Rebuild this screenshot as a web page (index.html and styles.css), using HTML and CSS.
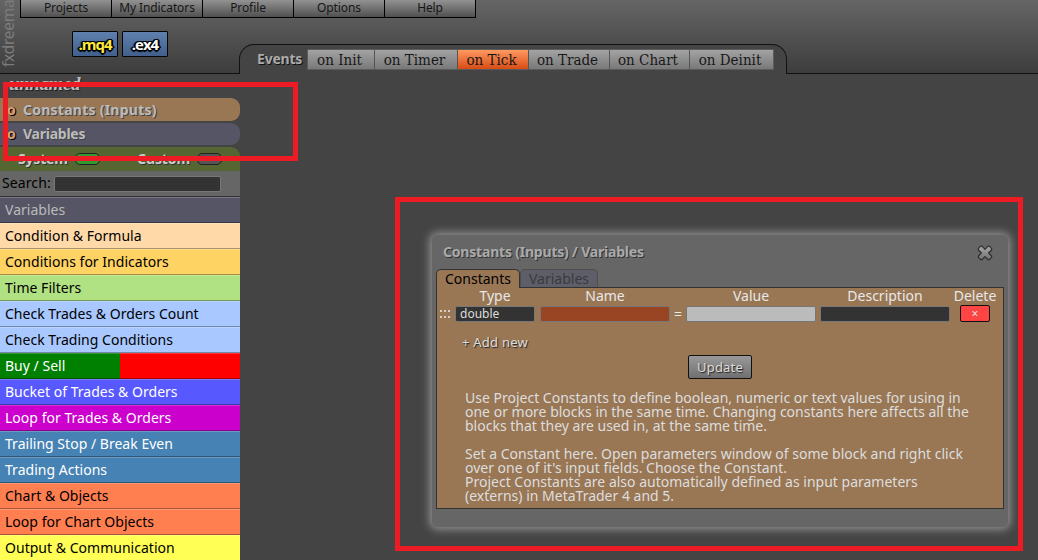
FILE: index.html
```html
<!DOCTYPE html>
<html lang="en">
<head>
<meta charset="utf-8">
<title>fxdreema</title>
<link rel="stylesheet" href="styles.css">
</head>
<body>
<header class="header">
  <div class="brand">fxdreema</div>
  <div class="header-main">
    <nav class="menu">
      <a>Projects</a><a>My Indicators</a><a>Profile</a><a>Options</a><a>Help</a>
    </nav>
    <div class="tools">
      <div class="exports">
        <button class="export export-src">.mq4</button>
        <button class="export">.ex4</button>
      </div>
      <div class="events">
        <span class="events-label">Events</span>
        <div class="event-tabs">
          <a class="w-init">on Init</a><a class="w-timer">on Timer</a><a class="w-tick active">on Tick</a><a class="w-trade">on Trade</a><a class="w-chart">on Chart</a><a class="w-deinit">on Deinit</a>
        </div>
      </div>
    </div>
  </div>
</header>

<aside class="sidebar">
  <div class="project-name">unnamed</div>
  <div class="pill pill-constants"><i>o</i><span>Constants (Inputs)</span></div>
  <div class="pill pill-variables"><i>o</i><span>Variables</span></div>
  <div class="sources">
    <span class="system">System</span><b class="switch on"></b>
    <span class="custom">Custom</span><b class="switch"></b>
  </div>
  <label class="search"><span>Search:</span><input type="text"></label>
  <ul class="blocks">
    <li class="c-variables"><span>Variables</span></li>
    <li class="c-condition"><span>Condition &amp; Formula</span></li>
    <li class="c-indicators"><span>Conditions for Indicators</span></li>
    <li class="c-time"><span>Time Filters</span></li>
    <li class="c-check"><span>Check Trades &amp; Orders Count</span></li>
    <li class="c-check"><span>Check Trading Conditions</span></li>
    <li class="c-buysell"><span>Buy / Sell</span></li>
    <li class="c-bucket"><span>Bucket of Trades &amp; Orders</span></li>
    <li class="c-loop"><span>Loop for Trades &amp; Orders</span></li>
    <li class="c-trading"><span>Trailing Stop / Break Even</span></li>
    <li class="c-trading"><span>Trading Actions</span></li>
    <li class="c-chart"><span>Chart &amp; Objects</span></li>
    <li class="c-chart"><span>Loop for Chart Objects</span></li>
    <li class="c-output"><span>Output &amp; Communication</span></li>
  </ul>
</aside>

<section class="dialog">
  <div class="dialog-head">
    <h2>Constants (Inputs) / Variables</h2>
    <svg class="close" width="16" height="16" viewBox="0 0 16 16">
      <defs><linearGradient id="steel" x1="0" y1="0" x2="0" y2="1"><stop offset="0" stop-color="#aaa"/><stop offset="1" stop-color="#707070"/></linearGradient></defs>
      <path d="M3.6 1.2H5L8 4.3 11 1.2h1.4L14.6 3.6V5L11.6 8l3 3v1.4l-2.2 2.2H11L8 11.6l-3 3H3.6L1.4 12.4V11l3-3-3-3V3.6Z" fill="url(#steel)" stroke="#2e2e2e" stroke-width="1.2" stroke-linejoin="round"/>
    </svg>
  </div>
  <div class="tabs"><a class="tab tab-on">Constants</a><a class="tab tab-off">Variables</a></div>
  <div class="panel">
    <div class="grid">
      <span></span><span>Type</span><span>Name</span><span></span><span>Value</span><span>Description</span><span>Delete</span>
      <svg class="grip" width="12" height="10" viewBox="0 0 12 10" fill="#d8d0c8"><path d="M0 1h2v2H0zM4 1h2v2H4zM8 1h2v2H8zM0 7h2v2H0zM4 7h2v2H4zM8 7h2v2H8z"/></svg>
      <input class="field dark" type="text" value="double">
      <input class="field rust" type="text">
      <span class="equals">=</span>
      <input class="field light" type="text">
      <input class="field dark" type="text">
      <button class="delete">×</button>
    </div>
    <a class="add">+ Add new</a>
    <button class="update">Update</button>
    <div class="help">
      <p>Use Project Constants to define boolean, numeric or text values for using in<br>one or more blocks in the same time. Changing constants here affects all the<br>blocks that they are used in, at the same time.</p>
      <p>Set a Constant here. Open parameters window of some block and right click<br>over one of it's input fields. Choose the Constant.<br>Project Constants are also automatically defined as input parameters<br>(externs) in MetaTrader 4 and 5.</p>
    </div>
  </div>
</section>

<div class="marker marker-source"></div>
<div class="marker marker-dialog"></div>
</body>
</html>
```

FILE: styles.css
```css
* { box-sizing: border-box; }
html, body { height: 100%; }
body {
  margin: 0;
  position: relative;
  overflow: hidden;
  background: #444;
  color: #000;
  font: 14px/20px "Noto Sans", sans-serif;
}
button, input { font-family: inherit; margin: 0; }

/* header */
.header {
  display: flex;
  height: 74px;
  background: linear-gradient(#656565, #3d3d3d);
  border-bottom: 1px solid #111;
}
.brand {
  width: 20px;
  height: 67px;
  writing-mode: vertical-rl;
  transform: rotate(180deg);
  font-size: 15.5px;
  line-height: 17px;
  letter-spacing: -0.25px;
  color: #7c7c7c;
  white-space: nowrap;
}
.header-main { flex: 1; }
.menu { display: flex; height: 18px; border-left: 1px solid #000; width: 456px; }
.menu a {
  width: 91px;
  height: 18px;
  border-right: 1px solid #000;
  border-bottom: 1px solid #000;
  background: linear-gradient(#929292, #505050);
  color: #161616;
  font-size: 12px;
  letter-spacing: -0.1px;
  line-height: 16px;
  text-align: center;
}
.tools { display: flex; height: 56px; }
.exports { display: flex; gap: 4px; width: 219px; padding: 13px 0 0 52px; }
.export {
  width: 46px;
  height: 26px;
  padding: 0;
  border: 1px solid #050505;
  border-radius: 1px;
  background: linear-gradient(#5f7fae, #42608b);
  color: #fff;
  font: bold 15px/22px "Open Sans", "Noto Sans", sans-serif;
  letter-spacing: -1px;
  text-shadow: -1px -1px #000, 1px -1px #000, -1px 1px #000, 1px 1px #000, 0 2px 1px #000, 2px 0 #000, -2px 0 1px #000;
}
.export-src { color: #ffeb3b; }
.events {
  display: flex;
  width: 548px;
  height: 30px;
  margin-top: 26px;
  padding: 5px 0 0 17px;
  background: #444;
  border: 1px solid #111;
  border-bottom: 0;
  border-radius: 15px 15px 0 0;
}
.events-label {
  width: 50px;
  color: #aaa;
  font-weight: bold;
  letter-spacing: -0.2px;
  line-height: 18px;
  text-shadow: 1px 1px #111;
}
.event-tabs {
  display: flex;
  height: 21px;
  width: 467px;
  border: 1px solid #5c5c5c;
  margin-top: -1px;
}
.event-tabs a {
  border-right: 1px solid #555;
  padding-right: 3px;
  background: linear-gradient(#a3a3a3, #797979);
  color: #181818;
  font: 15px/20px "DejaVu Serif Condensed", "DejaVu Serif", serif;
  font-stretch: condensed;
  text-align: center;
  white-space: nowrap;
}
.event-tabs a:last-child { border-right: 0; }
.event-tabs .active { background: linear-gradient(#ff9961, #d84c14); }
.w-init { width: 67px; }
.w-timer { width: 83px; }
.w-tick { width: 71px; }
.w-trade { width: 81px; }
.w-chart { width: 80px; }
.w-deinit { width: 83px; }

/* sidebar */
.sidebar { width: 240px; }
.project-name {
  height: 24px;
  padding-left: 9px;
  color: #bbb;
  font: italic bold 19px/20px "Liberation Serif", serif;
  letter-spacing: -0.4px;
  text-shadow: 1px 1px #222;
}
.pill {
  display: flex;
  gap: 6px;
  padding-left: 7px;
  border-radius: 0 9px 9px 0;
  color: #bbb;
  font-weight: bold;
  line-height: 23px;
  text-shadow: 1px 1px #444;
}
.pill i {
  width: 10px;
  font-style: normal;
  color: #dca070;
  text-shadow: 1px 1px #000, 1px 0 #222;
}
.pill span { letter-spacing: -0.25px; }
.pill-constants { height: 23px; background: #975; }
.pill-constants span { letter-spacing: 0.25px; }
.pill-variables { height: 22px; margin: 2px 0; background: #556; line-height: 22px; }
.sources {
  display: flex;
  align-items: center;
  height: 24px;
  padding-left: 18px;
  border-radius: 0 9px 0 0;
  background: #563;
  color: #ccc;
  font-weight: bold;
  text-shadow: 1px 1px #333;
}
.system { width: 57px; letter-spacing: -0.2px; }
.custom { width: 60px; margin-left: 37px; letter-spacing: -0.1px; }
.switch { width: 25px; height: 12px; border: 1px solid #222; border-radius: 5px; background: #555; }
.switch.on { background: #393; }
.search {
  display: flex;
  gap: 4px;
  height: 26px;
  padding: 5px 2px 0;
  background: #666;
  border-bottom: 1px solid #333;
}
.search span { line-height: 14px; width: 48px; letter-spacing: 0.1px; }
.search input {
  width: 167px;
  height: 16px;
  padding: 0;
  border: 1px solid #777;
  border-radius: 2px;
  background: #333;
}
.blocks { margin: 0; padding: 0; list-style: none; }
.blocks li {
  height: 26px;
  padding-left: 5px;
  border-top: 1px solid rgba(255,255,255,.2);
  border-bottom: 1px solid rgba(0,0,0,.32);
  line-height: 24px;
  letter-spacing: 0.02px;
  white-space: nowrap;
}
.c-variables { background: #556; color: #bbb; }
.c-condition { background: #ffd9a8; }
.c-indicators { background: #ffd363; }
.c-time { background: #b0e182; }
.c-check { background: #a8c8ff; }
.c-buysell { background: linear-gradient(90deg, green 50%, red 50%); color: #fff; }
.c-bucket { background: #5858ff; color: #fff; }
.c-loop { background: #c0c; color: #fff; }
.c-trading { background: #4682b4; color: #fff; }
.c-chart { background: #ff7f50; }
.c-output { background: #ffff55; }

/* floating dialog */
.dialog {
  position: absolute;
  left: 432px;
  top: 235px;
  width: 576px;
  height: 292px;
  padding: 0 4px;
  border-radius: 5px;
  background: #666;
  box-shadow: 0 0 10px 2px #999;
}
.dialog-head {
  display: flex;
  justify-content: space-between;
  height: 34px;
  padding: 10px 11px 0 7px;
}
.dialog-head h2 {
  margin: 0;
  color: #aaa;
  font-size: 14px;
  line-height: 14px;
  letter-spacing: -0.2px;
  text-shadow: 1px 1px #333;
}
.tabs { display: flex; height: 18px; }
.tab {
  height: 18px;
  border: 1px solid #333;
  border-bottom: 0;
  border-radius: 5px 5px 0 0;
  line-height: 17px;
  text-align: center;
}
.tab-on { position: relative; z-index: 1; width: 84px; height: 19px; background: #975; }
.tab-off { width: 78px; background: #5e5e68; border-color: #4d4d50; color: #3a3a3e; }
.panel {
  display: flex;
  flex-direction: column;
  width: 568px;
  height: 222px;
  padding-left: 3px;
  border: 1px solid #333;
  background: #975;
  color: #ddd;
}
.grid {
  display: grid;
  grid-template-columns: 15px 85px 130px 16px 130px 134px 50px;
  grid-template-rows: 17px 17px;
  justify-items: center;
  align-items: center;
  line-height: 16px;
  color: #e8e8e8;
}
.grid > :nth-child(-n + 7) { align-self: start; }
.grid > :nth-child(7n + 2) { justify-self: start; width: 80px; text-align: center; }
.grid > :nth-child(7n + 6) { justify-self: end; width: 130px; text-align: center; }
.grid .grip { justify-self: start; }
.field {
  width: 130px;
  height: 16px;
  padding: 0 4px;
  border: 1px solid #777;
  border-radius: 2px;
  outline: 0;
  font-size: 12px;
  line-height: 14px;
  color: #ddd;
}
.grid > .field.dark:nth-child(7n + 2) { text-align: left; }
.dark { background: #333; }
.rust { background: #942; }
.light { background: #bbb; }
.equals { line-height: 14px; }
.delete {
  width: 30px;
  height: 17px;
  padding: 0;
  border: 1px solid #111;
  border-radius: 2px;
  background: #f44;
  color: #ddd;
  font-size: 12px;
  line-height: 13px;
}
.add {
  margin: 12px 0 0 22px;
  font-size: 13px;
  letter-spacing: 0.25px;
  line-height: 16px;
  text-shadow: 1px 1px 1px #222;
}
.update {
  width: 64px;
  height: 25px;
  margin: 5px 0 0 248px;
  padding: 0;
  border: 1px solid #111;
  border-radius: 2px;
  background: linear-gradient(#999, #707070);
  color: #ddd;
  font-size: 13px;
  letter-spacing: 0.2px;
  line-height: 22px;
  text-shadow: 1px 1px 1px #222;
}
.help { padding: 12px 0 0 25px; line-height: 14px; white-space: nowrap; }
.help p { margin: 0 0 14px; }

/* red highlight frames */
.marker { position: absolute; border: 5px solid #ed1c24; }
.marker-source { left: 3px; top: 82px; width: 295px; height: 79px; }
.marker-dialog { left: 395px; top: 197px; width: 628px; height: 354px; }
```
